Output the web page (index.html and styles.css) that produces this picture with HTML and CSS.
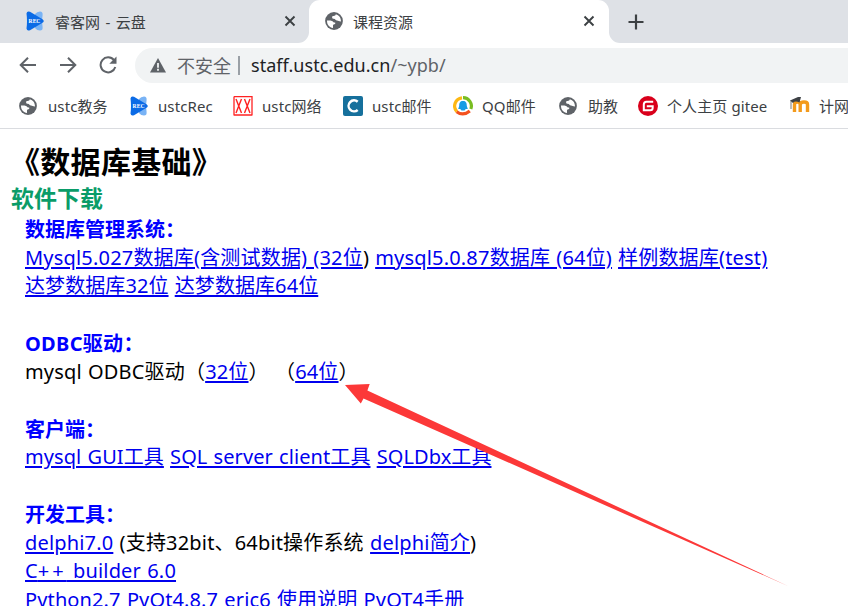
FILE: index.html
```html
<!DOCTYPE html>
<html lang="zh-CN">
<head>
<meta charset="utf-8">
<title>课程资源</title>
<link rel="stylesheet" href="styles.css">
</head>
<body>
<svg width="0" height="0" class="defs">
  <symbol id="globe" viewBox="0 0 18 18">
    <circle cx="9" cy="9" r="8.9" fill="#5f6368"/>
    <path d="M2 8.6c2 0 3.600-.1 4.900.3 1 .3 1.300 1.300 2.200 1.500h1.100v1.500c-1.500.2-2.200.7-2.200 1.600v2.400C4.600 15.600 2 12.800 2 9z" fill="#fff"/>
    <path d="M10.800 2.200c-.2 1.200-.8 1.700-2.300 1.700-.9 0-1.400.5-1.400 1.300 0 1.100.7 1.500 1.800 1.500 1.500 0 1.700 1.800 3.100 1.800 1.400 0 1.700.9 4 .9.100-3.600-2-6.300-5.200-7.200z" fill="#fff"/>
  </symbol>
  <symbol id="rec" viewBox="0 0 20 20">
    <path d="M10 3Q12 .5 15 .5q3 0 2.600 3.500L17 10l.6 6q.4 3.500-2.600 3.500-3 0-5-2.500z" fill="#79b3f5"/>
    <path d="M1.500 2.500Q2-.5 5 .8l12.500 7.400q2.500 1.800 0 3.600L5 19.200q-3 1.300-3.500-1.700Q2.500 10 1.500 2.500z" fill="#0b6be6"/>
    <text x="3.600" y="12" font-size="5.600" font-weight="700" font-family="Liberation Serif, serif" fill="#fff">REC</text>
  </symbol>
  <symbol id="close" viewBox="0 0 12 12">
    <path d="M1.500 1.500l9 9m0-9l-9 9" stroke="#3c4043" stroke-width="1.900"/>
  </symbol>
</svg>
<header>
  <div class="tabs">
    <div class="tab first"><svg class="rec"><use href="#rec"/></svg><span>睿客网 - 云盘</span><svg class="close"><use href="#close"/></svg></div>
    <div class="tab active"><svg class="globe"><use href="#globe"/></svg><span>课程资源</span><svg class="close"><use href="#close"/></svg></div>
    <div class="newtab"><svg width="16" height="16" viewBox="0 0 16 16"><path d="M8 .5v15M.5 8h15" stroke="#3c4043" stroke-width="2.200"/></svg></div>
  </div>
  <div class="toolbar">
    <svg class="nav" viewBox="0 0 18 18"><path d="M17 9H2m7-7.300L1.700 9 9 16.300"/></svg>
    <svg class="nav" viewBox="0 0 18 18"><path d="M1 9h15M9 1.700L16.300 9 9 16.300"/></svg>
    <svg class="nav" viewBox="0 0 18 18"><path d="M15 4.200A7.500 7.500 0 1 0 16.300 11"/><path class="tip" d="M17.500.5v7.200h-7.200z"/></svg>
    <div class="omnibox">
      <svg width="16" height="15" viewBox="0 0 16 15"><path d="M8 0l8 14.500H0z" fill="#5f6368"/><path d="M8 5v4.800m0 1v2" stroke="#f1f3f4" stroke-width="1.800"/></svg>
      <span class="unsafe">不安全</span><i></i><span class="url">staff.ustc.edu.cn<em>/~ypb/</em></span>
    </div>
  </div>
  <nav class="bookmarks">
    <a><svg class="globe"><use href="#globe"/></svg><span>ustc教务</span></a>
    <a><svg class="rec"><use href="#rec"/></svg><span>ustcRec</span></a>
    <a><svg viewBox="0 0 19 20"><path d="M.5.500h18v19M.5.500v19M.5 19h18" fill="none" stroke="#f22" stroke-width="1.300"/><path d="M2.500 3l5.500 14m0-14l-5.500 14m8.500-14l5.500 14m0-14l-5.500 14" stroke="#f22" stroke-width="1.400"/></svg><span>ustc网络</span></a>
    <a><svg viewBox="0 0 20 20"><rect width="20" height="20" rx="2" fill="#16709c"/><path d="M14.700 5.700A5.500 5.500 0 1 0 14.700 14" fill="none" stroke="#fff" stroke-width="2.500"/></svg><span>ustc邮件</span></a>
    <a><svg viewBox="0 0 20 20"><g fill="none" stroke-width="3.200"><path d="M3.800 15.600A8.300 8.300 0 0 1 9 1.800" stroke="#fdb813"/><path d="M10 1.700A8.300 8.300 0 0 1 17.800 13" stroke="#79bd22"/><path d="M3.700 15.700Q10 20.500 16.800 14.900" stroke="#f4511e"/></g><path d="M10 5c-3 0-3.800 2-3.800 5l-1 3h2l1.300 1.500h3l1.300-1.500h2l-1-3c0-3-.8-5-3.800-5z" fill="#169be5"/></svg><span>QQ邮件</span></a>
    <a><svg class="globe"><use href="#globe"/></svg><span>助教</span></a>
    <a><svg viewBox="0 0 20 20"><circle cx="10" cy="10" r="10" fill="#d9001b"/><path d="M15.200 5.700H8.500Q5.800 5.700 5.800 8.500v5.800h6.400q2.500 0 2.500-2.500V10.200H8.800" fill="none" stroke="#fff" stroke-width="2"/></svg><span>个人主页 gitee</span></a>
    <a><svg viewBox="0 0 20 20"><path d="M4.500 16V8.500q0-2.500 2.800-2.500t2.900 2.500V16m0-7.500Q10.500 6 14 6t3.500 2.500V16" fill="none" stroke="#f39a1c" stroke-width="3.400"/><path d="M0 4.500L8 1h3L9.500 6.500Q5 4.500 3 7z" fill="#3d4145"/><path d="M1 4.500V13" stroke="#555" stroke-width=".8"/></svg><span>计网</span></a>
  </nav>
</header>
<main>
  <h1>《数据库基础》</h1>
  <h2>软件下载</h2>
  <section>
    <h3>数据库管理系统：</h3>
    <p class="loose"><a href="#">Mysql5.027数据库(含测试数据) (32位</a>) <a href="#">mysql5.0.87数据库 (64位)</a> <a href="#">样例数据库(test)</a></p>
    <p class="tight"><a href="#">达梦数据库32位</a> <a href="#">达梦数据库64位</a></p>
  </section>
  <section>
    <h3 class="wide">ODBC驱动：</h3>
    <p>mysql ODBC驱动（<a href="#">32位</a>） （<a href="#">64位</a>）</p>
  </section>
  <section>
    <h3>客户端：</h3>
    <p class="tight"><a href="#">mysql GUI工具</a> <a href="#">SQL server client工具</a> <a href="#">SQLDbx工具</a></p>
  </section>
  <section>
    <h3>开发工具：</h3>
    <p><a href="#">delphi7.0</a> (支持32bit、64bit操作系统 <a href="#">delphi简介</a>)</p>
    <p><a href="#">C<span class="plus">++</span> builder 6.0</a></p>
    <p class="last"><a href="#">Python2.7 PyQt4.8.7 eric6 使用说明 PyQT4手册</a></p>
  </section>
</main>
<svg class="arrow" viewBox="0 0 848 606"><path d="M345 385l24.700-1-2.300 6.400L789 586.500 363.500 398.500l-2.700 5z" fill="#fc3838"/></svg>
</body>
</html>
```
FILE: styles.css
```css
* { box-sizing: border-box; }
body { margin: 0; width: 848px; height: 606px; overflow: hidden; position: relative; background: #fff; font-family: "Noto Sans", "Noto Sans CJK SC", sans-serif; }
svg { flex: none; }
.defs { display: none; }
header { height: 129px; border-bottom: 1px solid #dadce0; color: #3c4043; }
.tabs { display: flex; height: 43px; background: linear-gradient(#dee1e6 50%, #fff 50%); }
.tab { display: flex; align-items: center; font-size: 15px; height: 43px; }
.tab span { flex: 1; }
.first { width: 309px; padding: 0 13px 0 25px; background: #dee1e6; border-bottom-right-radius: 11px; word-spacing: 1.500px; }
.first .rec { margin-right: 10px; }
.active { width: 300px; padding: 0 14px 0 16px; background: #fff; border-radius: 11px 11px 0 0; }
.active .globe { margin-right: 10px; }
.tab .globe, .tab .rec, .close { position: relative; top: -1px; }
.close { width: 12px; height: 12px; }
.newtab { flex: 1; background: #dee1e6; border-bottom-left-radius: 11px; padding: 13px 0 0 19px; }
.globe { width: 18px; height: 18px; }
.rec { width: 20px; height: 20px; }
.toolbar { display: flex; align-items: center; height: 40px; padding: 5px 0 0 19px; }
.nav { width: 18px; height: 18px; margin-right: 22px; position: relative; top: -1px; fill: none; stroke: #5f6368; stroke-width: 2; }
.nav .tip { fill: #5f6368; stroke: none; }
.omnibox { display: flex; align-items: center; width: 720px; height: 35px; margin-left: -4px; padding-left: 15px; background: #f1f3f4; border-radius: 18px 0 0 18px; font-size: 18px; flex: none; }
.omnibox span { position: relative; top: -1px; }
.unsafe { margin-left: 11px; color: #5f6368; }
.omnibox i { width: 2px; height: 19px; margin: 0 11px 0 7px; background: #9aa0a6; }
.url { color: #202124; letter-spacing: .04px; }
.url em { font-style: normal; color: #5f6368; }
.bookmarks { display: grid; grid-template-columns: 110px 104px 110px 110px 106px 79px 152px 39px; height: 45px; padding-left: 19px; align-items: center; font-size: 15px; letter-spacing: .1px; }
.bookmarks a { display: flex; align-items: center; white-space: nowrap; }
.bookmarks svg { width: 20px; height: 20px; margin-right: 9px; }
.bookmarks .globe { width: 18px; height: 18px; margin-right: 11px; }
main { padding: 14px 0 0 25px; height: 477px; overflow: hidden; color: #000; }
h1, h2, h3, p { margin: 0; white-space: nowrap; }
h1 { font-size: 30px; line-height: 38px; height: 38px; margin-left: -15px; letter-spacing: .3px; }
h2 { font-size: 23px; line-height: 34px; margin-left: -14px; color: #0a9c68; }
h3, p { font-size: 20px; line-height: 28.500px; height: 28.500px; }
h3 { color: #00f; line-height: 30.500px; }
.wide { letter-spacing: .3px; line-height: 29px; }
p { letter-spacing: .17px; word-spacing: .9px; }
.loose { letter-spacing: .19px; word-spacing: .6px; }
.tight { letter-spacing: .08px; }
.last { letter-spacing: .12px; }
.plus { letter-spacing: 3px; }
section { margin-bottom: 28.500px; }
a[href] { color: #00e; text-decoration: underline; text-decoration-thickness: 2px; text-underline-offset: 2px; }
.arrow { position: absolute; left: 0; top: 0; width: 848px; height: 606px; pointer-events: none; }
```
